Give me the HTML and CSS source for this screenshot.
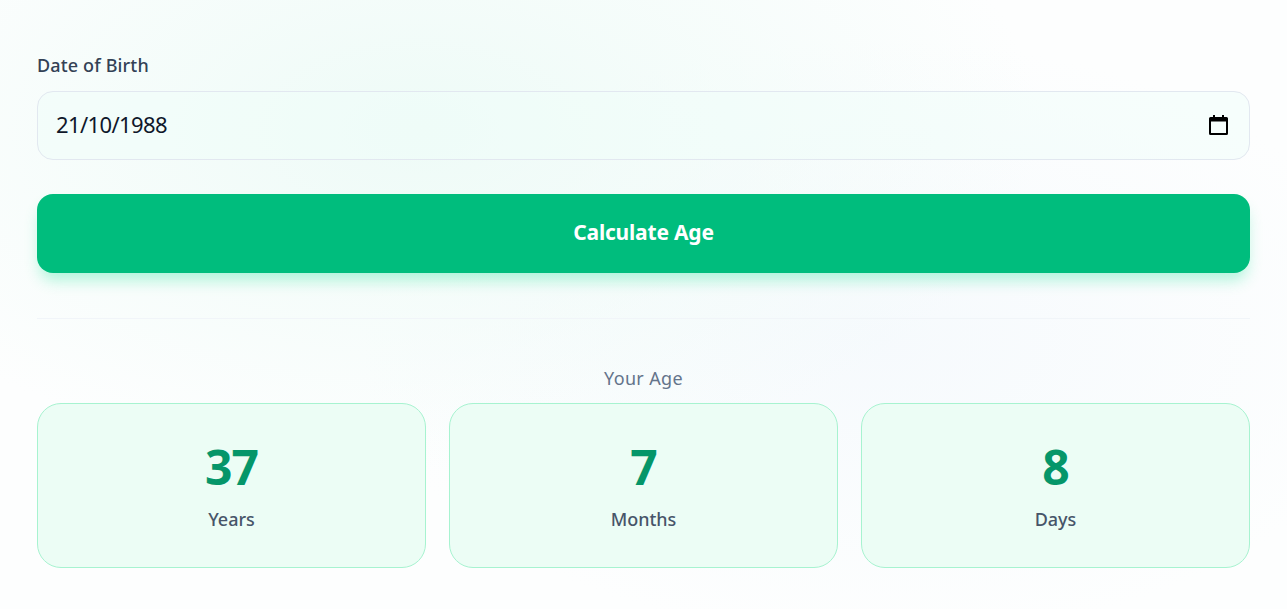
FILE: index.html
```html
<!DOCTYPE html>
<html lang="en">
<head>
    <meta charset="UTF-8">
    <meta name="viewport" content="width=device-width, initial-scale=1.0">
    <title>Age Calculator</title>
    <link rel="stylesheet" href="styles.css">
</head>
<body>
    <div class="calculator">
        <label class="field-label" for="dob">Date of Birth</label>
        <div class="date-input" id="dob">
            <span>21/10/1988</span>
            <svg class="calendar-icon" viewBox="0 0 19 20" width="19" height="20">
                <path fill-rule="evenodd" d="M4 0h2v2h7V0h2v2h2.5A1.5 1.5 0 0 1 19 3.500v15a1.500 1.500 0 0 1-1.500 1.500h-16A1.500 1.500 0 0 1 0 18.500v-15A1.500 1.500 0 0 1 1.500 2H4zM2 6.500V18h15V6.500z"/>
            </svg>
        </div>

        <button class="btn-calculate">Calculate Age</button>

        <div class="divider"></div>

        <div class="result-title">Your Age</div>
        <div class="result-grid">
            <div class="result-card">
                <div class="result-value">37</div>
                <div class="result-unit">Years</div>
            </div>
            <div class="result-card">
                <div class="result-value">7</div>
                <div class="result-unit">Months</div>
            </div>
            <div class="result-card">
                <div class="result-value">8</div>
                <div class="result-unit">Days</div>
            </div>
        </div>
    </div>
</body>
</html>
```

FILE: styles.css
```css
body {
    font-family: 'Noto Sans', sans-serif;
    background:
        radial-gradient(ellipse 620px 340px at 420px 130px, #eefbf7, rgba(238, 251, 247, 0) 100%),
        radial-gradient(ellipse 520px 300px at 880px 340px, #f6fafd, rgba(246, 250, 253, 0) 100%),
        #fdfefe;
    color: #334155;
    margin: 0;
    min-height: 100vh;
}

.calculator {
    padding: 53px 37px 40px;
}

.field-label {
    display: block;
    font-size: 18px;
    font-weight: 500;
    line-height: 24px;
    letter-spacing: 0.15px;
    margin-bottom: 14px;
}

.date-input {
    height: 67px;
    border: 1px solid #e2e8f0;
    border-radius: 16px;
    padding: 0 21px 0 18px;
    display: flex;
    align-items: center;
    justify-content: space-between;
    font-size: 22px;
    letter-spacing: -0.6px;
    color: #0f172a;
    background: rgba(240, 253, 249, 0.5);
}

.date-input span {
    margin-top: -4px;
}

.calendar-icon {
    display: block;
    margin-top: -2px;
}

.btn-calculate {
    display: block;
    width: 100%;
    height: 79px;
    margin-top: 34px;
    padding-bottom: 4px;
    border: none;
    border-radius: 16px;
    background: #00bd7d;
    color: white;
    font-family: inherit;
    font-size: 21px;
    font-weight: 700;
    letter-spacing: -0.2px;
    box-shadow: 0 10px 15px -3px rgba(0, 225, 140, 0.3);
}

.divider {
    border-top: 1px solid #f1f5f9;
    margin-top: 45px;
}

.result-title {
    margin-top: 47px;
    text-align: center;
    font-size: 18px;
    line-height: 24px;
    letter-spacing: 0.35px;
    color: #64748b;
}

.result-grid {
    display: grid;
    grid-template-columns: repeat(3, 1fr);
    gap: 23px;
    margin-top: 13px;
}

.result-card {
    height: 165px;
    box-sizing: border-box;
    border: 1px solid #a7f3d0;
    border-radius: 24px;
    background: #ecfdf5;
    text-align: center;
    padding-top: 31px;
}

.result-value {
    font-size: 48px;
    font-weight: 700;
    line-height: 64px;
    letter-spacing: -1px;
    color: #059669;
}

.result-unit {
    font-size: 18px;
    font-weight: 500;
    line-height: 24px;
    margin-top: 8px;
    color: #475569;
}
```
